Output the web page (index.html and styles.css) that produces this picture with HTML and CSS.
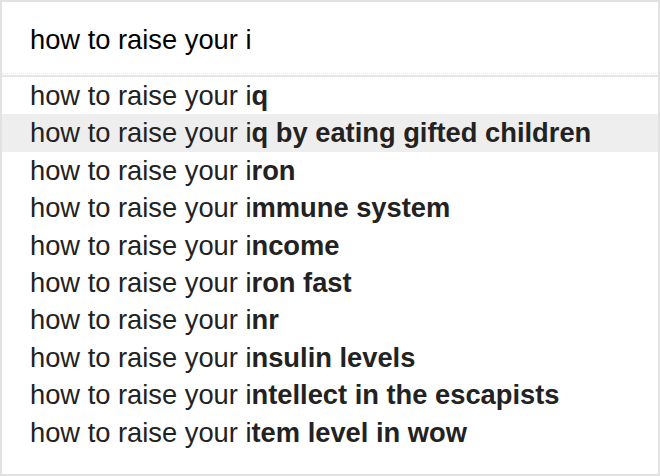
FILE: index.html
```html
<!DOCTYPE html>
<html>
<head>
<meta charset="utf-8">
<link rel="stylesheet" href="styles.css">
</head>
<body>
<div class="box">
  <div class="query">how to raise your i</div>
  <div class="divider"></div>
  <ul class="suggestions">
    <li>how to raise your i<b>q</b></li>
    <li class="active">how to raise your i<b>q by eating gifted children</b></li>
    <li>how to raise your i<b>ron</b></li>
    <li>how to raise your i<b>mmune system</b></li>
    <li>how to raise your i<b>ncome</b></li>
    <li>how to raise your i<b>ron fast</b></li>
    <li>how to raise your i<b>nr</b></li>
    <li>how to raise your i<b>nsulin levels</b></li>
    <li>how to raise your i<b>ntellect in the escapists</b></li>
    <li>how to raise your i<b>tem level in wow</b></li>
  </ul>
</div>
</body>
</html>
```
FILE: styles.css
```css
html, body {
  margin: 0;
  padding: 0;
  background: #ffffff;
}
.box {
  box-sizing: border-box;
  width: 660px;
  height: 476px;
  border: 2px solid #e2e2e2;
  background: #ffffff;
  font-family: "Liberation Sans", Arial, sans-serif;
  font-size: 27.3px;
}
.query {
  padding: 23px 28px 18px 28px;
  line-height: 30px;
  color: #000000;
  border-bottom: 1px dotted #e6e6e6;
}
.divider {
  margin-top: 1px;
  height: 2px;
  background: #e6e6e6;
}
.suggestions {
  list-style: none;
  margin: 0;
  padding: 0;
}
.suggestions li {
  height: 37.4px;
  line-height: 37.4px;
  padding-left: 28px;
  color: #222222;
  white-space: nowrap;
}
.suggestions li b {
  font-weight: bold;
  color: #222222;
}
.suggestions li.active {
  background: #eeeeee;
}
```
